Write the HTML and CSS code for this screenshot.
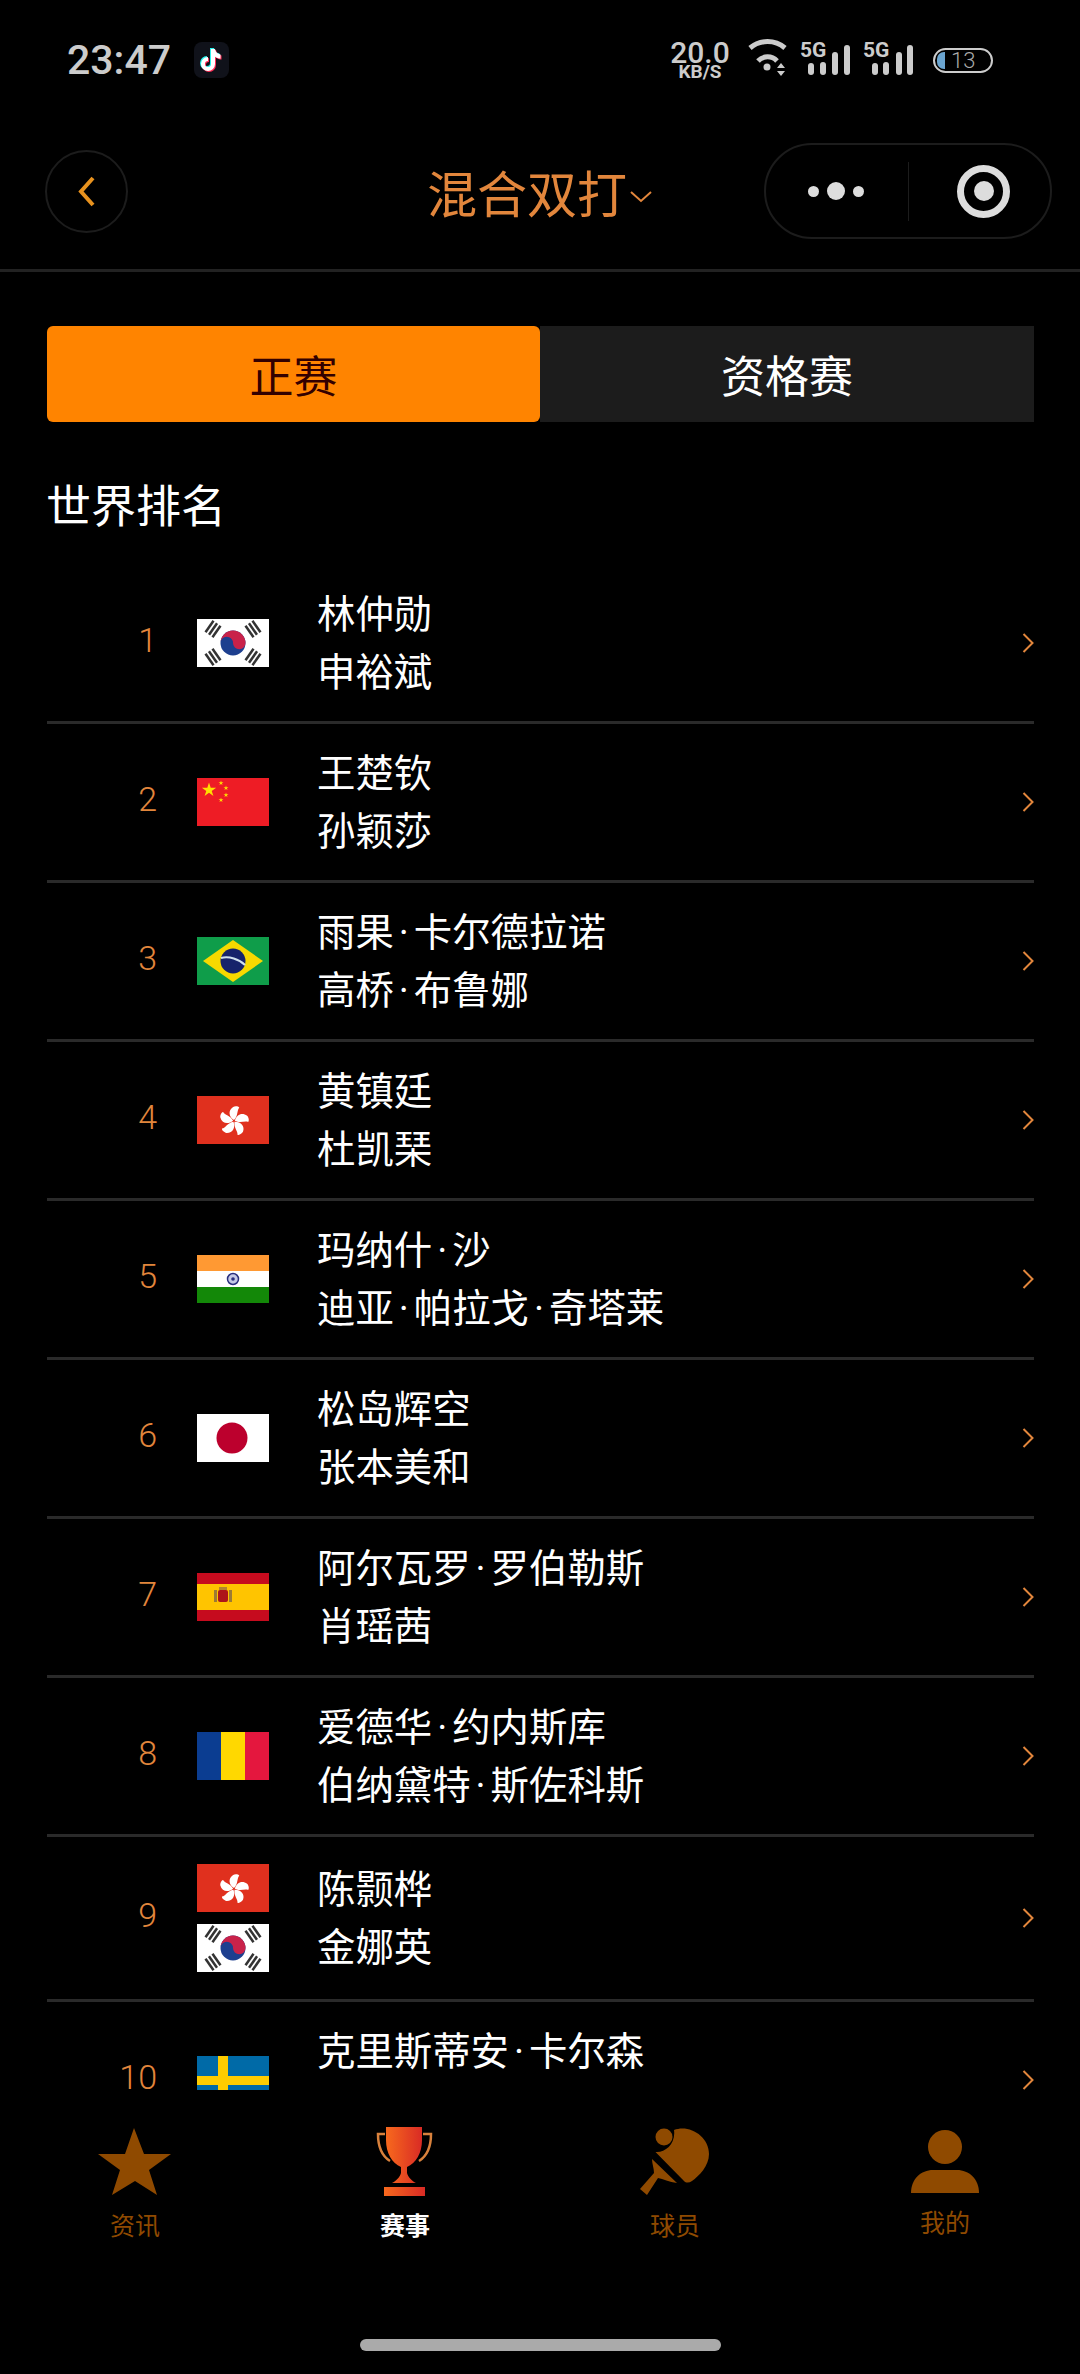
FILE: index.html
```html
<!DOCTYPE html>
<html lang="zh-CN">
<head>
  <meta charset="UTF-8">
  <title>混合双打</title>
  <link rel="stylesheet" href="styles.css">
</head>
<body>

<svg class="defs" width="0" height="0" aria-hidden="true">
  <defs>
    <polygon id="star" points="0,-1 .225,-.309 .951,-.309 .363,.118 .588,.809 0,.382 -.588,.809 -.363,.118 -.951,-.309 -.225,-.309"/>
    <path id="petal" d="M0 -1C-6 -5 -7 -12 -1 -16C1 -17 5 -17 6 -15C3 -12 5 -6 0 -1Z" transform="scale(.88)"/>
    <symbol id="flag-kr" viewBox="0 0 72 48">
      <rect width="72" height="48" fill="#fff"/>
      <circle cx="36" cy="24" r="12.5" fill="#1d3f8f"/>
      <path d="M23.500 24A12.500 12.500 0 0 1 48.500 24A6.250 6.250 0 0 1 36 24A6.250 6.250 0 0 0 23.500 24Z" fill="#c9224a"/>
      <g fill="#333">
        <g transform="translate(16 10) rotate(-55)"><rect x="-7" y="-5.500" width="14" height="2.500"/><rect x="-7" y="-1.200" width="14" height="2.500"/><rect x="-7" y="3" width="14" height="2.500"/></g>
        <g transform="translate(56 10) rotate(55)"><rect x="-7" y="-5.500" width="14" height="2.500"/><rect x="-7" y="-1.200" width="14" height="2.500"/><rect x="-7" y="3" width="14" height="2.500"/></g>
        <g transform="translate(16 38) rotate(55)"><rect x="-7" y="-5.500" width="14" height="2.500"/><rect x="-7" y="-1.200" width="14" height="2.500"/><rect x="-7" y="3" width="14" height="2.500"/></g>
        <g transform="translate(56 38) rotate(-55)"><rect x="-7" y="-5.500" width="14" height="2.500"/><rect x="-7" y="-1.200" width="14" height="2.500"/><rect x="-7" y="3" width="14" height="2.500"/></g>
      </g>
    </symbol>
    <symbol id="flag-hk" viewBox="0 0 72 48">
      <rect width="72" height="48" fill="#e0301e"/>
      <g fill="#fff" transform="translate(37 25)">
        <use href="#petal"/>
        <use href="#petal" transform="rotate(72)"/>
        <use href="#petal" transform="rotate(144)"/>
        <use href="#petal" transform="rotate(216)"/>
        <use href="#petal" transform="rotate(288)"/>
      </g>
    </symbol>
  </defs>
</svg>

<div class="app">
  <div class="statusbar">
    <span class="clock">23:47</span>
    <svg class="tiktok" width="35" height="36" viewBox="0 0 35 36">
      <rect width="35" height="36" rx="8" fill="#10121a"/>
      <path d="M17 7h4c.5 3 2.5 5 5.5 5.5v4c-2 0-4-.7-5.5-1.8v7.3a7 7 0 1 1-7-7v4a3 3 0 1 0 3 3Z" fill="#25f4ee" transform="translate(-1 -1)"/>
      <path d="M17 7h4c.5 3 2.5 5 5.5 5.5v4c-2 0-4-.7-5.5-1.8v7.3a7 7 0 1 1-7-7v4a3 3 0 1 0 3 3Z" fill="#fe2c55" transform="translate(1 1)"/>
      <path d="M17 7h4c.5 3 2.5 5 5.5 5.5v4c-2 0-4-.7-5.5-1.8v7.3a7 7 0 1 1-7-7v4a3 3 0 1 0 3 3Z" fill="#fff"/>
    </svg>
    <div class="status-right">
      <div class="speed">
        <span class="speed-num">20.0</span>
        <span class="speed-unit">KB/S</span>
      </div>
      <svg class="wifi" width="39" height="40" viewBox="0 0 39 40">
        <g fill="none" stroke="#ccc" stroke-width="5">
          <path d="M2 10A27 27 0 0 1 37 10"/>
          <path d="M10 23A13 13 0 0 1 29 23"/>
        </g>
        <circle cx="19" cy="29" r="3.5" fill="#ccc"/>
        <path d="M33 25l4 5h-8ZM33 38l4-5h-8Z" fill="#ccc"/>
      </svg>
      <div class="signal">
        <span class="signal-text">5G</span>
        <svg width="50" height="36" viewBox="0 0 50 36">
          <rect x="8" y="21" width="6" height="12" rx="3"/>
          <rect x="20" y="20" width="6" height="13" rx="3"/>
          <rect x="32" y="10" width="6" height="23" rx="3"/>
          <rect x="44" y="3" width="6" height="30" rx="3"/>
        </svg>
      </div>
      <div class="signal">
        <span class="signal-text">5G</span>
        <svg width="50" height="36" viewBox="0 0 50 36">
          <rect x="9" y="21" width="6" height="12" rx="3"/>
          <rect x="20" y="20" width="6" height="13" rx="3"/>
          <rect x="33" y="10" width="6" height="23" rx="3"/>
          <rect x="44" y="3" width="6" height="30" rx="3"/>
        </svg>
      </div>
      <div class="battery">
        <span class="battery-fill"></span>
        <span class="battery-num">13</span>
      </div>
    </div>
  </div>

  <div class="nav">
    <div class="back">
      <svg width="19" height="31" viewBox="0 0 19 31"><polyline points="16,2 4,15.5 16,29" fill="none" stroke="#e8921e" stroke-width="4"/></svg>
    </div>
    <div class="nav-title">
      <span>混合双打</span>
      <svg width="22" height="12" viewBox="0 0 22 12"><polyline points="1,1 11,10 21,1" fill="none" stroke="#e2863c" stroke-width="2"/></svg>
    </div>
    <div class="capsule">
      <div class="capsule-dots">
        <span class="dot"></span>
        <span class="dot dot-big"></span>
        <span class="dot"></span>
      </div>
      <span class="capsule-line"></span>
      <div class="capsule-target"><span></span></div>
    </div>
  </div>

  <div class="tabs">
    <div class="tab tab-active">正赛</div>
    <div class="tab">资格赛</div>
  </div>

  <h2 class="section-title">世界排名</h2>

  <div class="list">
    <div class="row">
      <span class="rank">1</span>
      <div class="flags"><svg class="flag" viewBox="0 0 72 48"><use href="#flag-kr"/></svg></div>
      <div class="names"><div>林仲勋</div><div>申裕斌</div></div>
      <svg class="arrow" viewBox="0 0 12 20"><polyline points="1.5,1 10.5,10 1.5,19"/></svg>
    </div>
    <div class="row">
      <span class="rank">2</span>
      <div class="flags">
        <svg class="flag" viewBox="0 0 72 48">
          <rect width="72" height="48" fill="#ee1c25"/>
          <g fill="#ffde00">
            <use href="#star" transform="translate(12 12) scale(7.5)"/>
            <use href="#star" transform="translate(24 5) scale(2.6)"/>
            <use href="#star" transform="translate(29 10) scale(2.6)"/>
            <use href="#star" transform="translate(29 17) scale(2.6)"/>
            <use href="#star" transform="translate(24 22) scale(2.6)"/>
          </g>
        </svg>
      </div>
      <div class="names"><div>王楚钦</div><div>孙颖莎</div></div>
      <svg class="arrow" viewBox="0 0 12 20"><polyline points="1.5,1 10.5,10 1.5,19"/></svg>
    </div>
    <div class="row">
      <span class="rank">3</span>
      <div class="flags">
        <svg class="flag" viewBox="0 0 72 48">
          <rect width="72" height="48" fill="#0f9d4a"/>
          <polygon points="6,24 36,3 66,24 36,45" fill="#f7d900"/>
          <circle cx="36" cy="24" r="12.5" fill="#16236b"/>
          <path d="M24 21C32 19 42 22 48 28" fill="none" stroke="#cfe0ee" stroke-width="2"/>
        </svg>
      </div>
      <div class="names"><div>雨果<span class="sep">·</span>卡尔德拉诺</div><div>高桥<span class="sep">·</span>布鲁娜</div></div>
      <svg class="arrow" viewBox="0 0 12 20"><polyline points="1.5,1 10.5,10 1.5,19"/></svg>
    </div>
    <div class="row">
      <span class="rank">4</span>
      <div class="flags"><svg class="flag" viewBox="0 0 72 48"><use href="#flag-hk"/></svg></div>
      <div class="names"><div>黄镇廷</div><div>杜凯琹</div></div>
      <svg class="arrow" viewBox="0 0 12 20"><polyline points="1.5,1 10.5,10 1.5,19"/></svg>
    </div>
    <div class="row">
      <span class="rank">5</span>
      <div class="flags">
        <svg class="flag" viewBox="0 0 72 48">
          <rect width="72" height="16" fill="#ff9933"/>
          <rect y="16" width="72" height="16" fill="#fff"/>
          <rect y="32" width="72" height="16" fill="#138808"/>
          <circle cx="36" cy="24" r="5.5" fill="#c5c9e6" stroke="#2a2f7e" stroke-width="1.5"/>
          <circle cx="36" cy="24" r="1.8" fill="#2a2f7e"/>
        </svg>
      </div>
      <div class="names"><div>玛纳什<span class="sep">·</span>沙</div><div>迪亚<span class="sep">·</span>帕拉戈<span class="sep">·</span>奇塔莱</div></div>
      <svg class="arrow" viewBox="0 0 12 20"><polyline points="1.5,1 10.5,10 1.5,19"/></svg>
    </div>
    <div class="row">
      <span class="rank">6</span>
      <div class="flags">
        <svg class="flag" viewBox="0 0 72 48">
          <rect width="72" height="48" fill="#fff"/>
          <circle cx="35" cy="24" r="15.5" fill="#bc002d"/>
        </svg>
      </div>
      <div class="names"><div>松岛辉空</div><div>张本美和</div></div>
      <svg class="arrow" viewBox="0 0 12 20"><polyline points="1.5,1 10.5,10 1.5,19"/></svg>
    </div>
    <div class="row">
      <span class="rank">7</span>
      <div class="flags">
        <svg class="flag" viewBox="0 0 72 48">
          <rect width="72" height="48" fill="#c60b1e"/>
          <rect y="11" width="72" height="26" fill="#ffc400"/>
          <rect x="21" y="17" width="10" height="12" rx="2" fill="#ad1519"/>
          <rect x="17" y="17" width="3" height="12" fill="#9c7a35"/>
          <rect x="32" y="17" width="3" height="12" fill="#9c7a35"/>
          <rect x="22" y="14" width="8" height="3" fill="#b3852e"/>
        </svg>
      </div>
      <div class="names"><div>阿尔瓦罗<span class="sep">·</span>罗伯勒斯</div><div>肖瑶茜</div></div>
      <svg class="arrow" viewBox="0 0 12 20"><polyline points="1.5,1 10.5,10 1.5,19"/></svg>
    </div>
    <div class="row">
      <span class="rank">8</span>
      <div class="flags">
        <svg class="flag" viewBox="0 0 72 48">
          <rect width="24" height="48" fill="#0b3d91"/>
          <rect x="24" width="24" height="48" fill="#ffd800"/>
          <rect x="48" width="24" height="48" fill="#e4173e"/>
        </svg>
      </div>
      <div class="names"><div>爱德华<span class="sep">·</span>约内斯库</div><div>伯纳黛特<span class="sep">·</span>斯佐科斯</div></div>
      <svg class="arrow" viewBox="0 0 12 20"><polyline points="1.5,1 10.5,10 1.5,19"/></svg>
    </div>
    <div class="row">
      <span class="rank">9</span>
      <div class="flags flags-double">
        <svg class="flag" viewBox="0 0 72 48"><use href="#flag-hk"/></svg>
        <svg class="flag" viewBox="0 0 72 48"><use href="#flag-kr"/></svg>
      </div>
      <div class="names"><div>陈颢桦</div><div>金娜英</div></div>
      <svg class="arrow" viewBox="0 0 12 20"><polyline points="1.5,1 10.5,10 1.5,19"/></svg>
    </div>
    <div class="row">
      <span class="rank">10</span>
      <div class="flags">
        <svg class="flag" viewBox="0 0 72 48">
          <rect width="72" height="48" fill="#006aa7"/>
          <rect x="21" width="10" height="48" fill="#fecc00"/>
          <rect y="20" width="72" height="9" fill="#fecc00"/>
        </svg>
      </div>
      <div class="names"><div>克里斯蒂安<span class="sep">·</span>卡尔森</div><div>克里斯蒂娜<span class="sep">·</span>卡尔伯格</div></div>
      <svg class="arrow" viewBox="0 0 12 20"><polyline points="1.5,1 10.5,10 1.5,19"/></svg>
    </div>
  </div>

  <div class="tabbar">
    <div class="bar-item">
      <svg class="bar-icon" width="74" height="71" viewBox="0 0 74 71"><polygon points="36,2 46,28 73,28 51,44 59,69 37,55 14,69 22,44 0,28 27,28" fill="#8f4a00"/></svg>
      <span class="bar-label">资讯</span>
    </div>
    <div class="bar-item">
      <svg class="bar-icon" width="58" height="71" viewBox="0 0 58 71">
        <defs>
          <linearGradient id="cup" x1="0" x2="1" y1="0" y2="0">
            <stop offset="0" stop-color="#f7691d"/>
            <stop offset="1" stop-color="#d92b25"/>
          </linearGradient>
        </defs>
        <path d="M10 1H46V14C46 27 40 37 31 41V47C32 51 36 55 40 57H16C20 55 24 51 25 47V41C16 37 10 27 10 14Z" fill="url(#cup)"/>
        <path d="M9 8H2C2 20 6 30 14 35M47 8H55C55 20 51 30 43 35" fill="none" stroke="#d8813c" stroke-width="2.5"/>
        <rect x="8" y="61" width="41" height="9" fill="url(#cup)"/>
      </svg>
      <span class="bar-label bar-label-active">赛事</span>
    </div>
    <div class="bar-item">
      <svg class="bar-icon" width="72" height="71" viewBox="0 0 72 71" fill="#8f4a00">
        <circle cx="25" cy="11" r="8.5"/>
        <path d="M35 4C50 -2 70 10 70 28C70 40 60 50 53 55C50 57 47 57 45 55L16.5 26C26 27 37 18 35 4Z"/>
        <path d="M13 33L38 57C30 56 24 53 19 52L8 69L1 63L15 47C15 42 13 38 13 33Z"/>
      </svg>
      <span class="bar-label">球员</span>
    </div>
    <div class="bar-item">
      <svg class="bar-icon bar-icon-me" width="68" height="65" viewBox="0 0 68 65" fill="#8f4a00">
        <circle cx="34" cy="18" r="17"/>
        <path d="M0 64C0 50 10 41 22 41H46C58 41 68 50 68 64Z"/>
      </svg>
      <span class="bar-label">我的</span>
    </div>
    <div class="home-bar"></div>
  </div>
</div>

</body>
</html>
```

FILE: styles.css
```css
* {
  box-sizing: border-box;
}
body {
  margin: 0;
  background: #000;
  font-family: "Noto Sans CJK SC", Roboto, sans-serif;
  color: #fff;
}
.defs {
  position: absolute;
}
.app {
  width: 1080px;
  height: 2374px;
  display: flex;
  flex-direction: column;
  overflow: hidden;
}

/* status bar */
.statusbar {
  height: 120px;
  display: flex;
  align-items: center;
  padding: 0 87px 0 67px;
  flex: none;
}
.clock {
  font-family: Roboto, sans-serif;
  font-size: 41px;
  font-weight: 500;
  color: #ccc;
}
.tiktok {
  margin-left: 23px;
}
.status-right {
  margin-left: auto;
  display: flex;
  align-items: center;
}
.speed {
  width: 58px;
  display: flex;
  flex-direction: column;
  align-items: center;
  font-family: Roboto, sans-serif;
  font-weight: 500;
  color: #ccc;
}
.speed-num {
  font-size: 30px;
  line-height: 22px;
}
.speed-unit {
  font-size: 19px;
  font-weight: 700;
  line-height: 15px;
}
.wifi {
  margin: 0 0 4px 19px;
}
.signal {
  position: relative;
  display: flex;
  margin-left: 13px;
  fill: #ccc;
}
.signal-text {
  position: absolute;
  left: 0;
  top: 0;
  font-family: Roboto, sans-serif;
  font-size: 21px;
  font-weight: 700;
  line-height: 16px;
  color: #ccc;
}
.battery {
  width: 60px;
  height: 25px;
  margin-left: 20px;
  border: 2px solid #ccc;
  border-radius: 13px;
  display: flex;
  align-items: center;
  padding-left: 2px;
}
.battery-fill {
  width: 8px;
  height: 17px;
  background: #6ba5d0;
  border-radius: 7px 0 0 7px;
}
.battery-num {
  margin-left: 6px;
  font-family: Roboto, sans-serif;
  font-size: 22px;
  font-weight: 300;
  line-height: 21px;
  color: #aaa;
}

/* title bar */
.nav {
  flex: none;
  height: 96px;
  margin: 23px 0 30px;
  padding: 0 28px 0 45px;
  display: flex;
  align-items: center;
}
.back {
  width: 83px;
  height: 83px;
  border: 2px solid #1c1c1c;
  border-radius: 50%;
  display: flex;
  align-items: center;
  justify-content: center;
}
.nav-title {
  margin-left: 299px;
  display: flex;
  align-items: center;
  font-size: 50px;
  line-height: 60px;
  color: #e2863c;
}
.nav-title svg {
  margin: 12px 0 0 3px;
}
.capsule {
  width: 288px;
  height: 96px;
  margin-left: auto;
  border: 2px solid #1c1c1c;
  border-radius: 48px;
  display: flex;
  align-items: center;
}
.capsule-dots {
  width: 140px;
  margin-right: 2px;
  display: flex;
  align-items: center;
  justify-content: center;
  gap: 8px;
}
.dot {
  width: 11px;
  height: 11px;
  border-radius: 50%;
  background: #ddd;
}
.dot-big {
  width: 18px;
  height: 18px;
}
.capsule-line {
  width: 1px;
  height: 59px;
  background: #1c1c1c;
}
.capsule-target {
  width: 53px;
  height: 53px;
  margin-left: 48px;
  border: 7px solid #ddd;
  border-radius: 50%;
  display: flex;
  align-items: center;
  justify-content: center;
}
.capsule-target span {
  width: 20px;
  height: 20px;
  border-radius: 50%;
  background: #ddd;
}

/* main / qualifying switch */
.tabs {
  flex: none;
  height: 153px;
  padding: 54px 46px 0 47px;
  border-top: 3px solid #222;
  display: flex;
}
.tab {
  flex: 0 0 494px;
  height: 96px;
  display: flex;
  align-items: center;
  justify-content: center;
  background: #1c1c1c;
  font-size: 44px;
  color: #fff;
}
.tab-active {
  flex-basis: 493px;
  background: #ff8400;
  border-radius: 6px;
  color: #300;
}
.section-title {
  flex: none;
  margin: 52px 0 31px 46px;
  font-size: 45px;
  font-weight: 400;
  line-height: 60px;
}

/* ranking list */
.list {
  flex: 1;
  min-height: 0;
  overflow: hidden;
  margin: 0 46px 0 47px;
}
.row {
  min-height: 159px;
  display: flex;
  align-items: center;
  border-bottom: 3px solid #2a2a2a;
}
.rank {
  width: 110px;
  margin-top: -6px;
  text-align: right;
  font-family: Roboto, sans-serif;
  font-size: 34px;
  font-weight: 300;
  color: #e2863c;
}
.flags {
  margin-left: 40px;
  display: flex;
  flex-direction: column;
  gap: 12px;
}
.flags-double {
  padding: 27px 0;
}
.flag {
  display: block;
  width: 72px;
  height: 48px;
}
.names {
  margin: -6px 0 0 48px;
  font-size: 38.4px;
  line-height: 58px;
}
.sep {
  margin: 0 5px;
  font-family: Roboto, sans-serif;
  line-height: 0;
}
.arrow {
  width: 12px;
  height: 20px;
  margin-left: auto;
  fill: none;
  stroke: #e2863c;
  stroke-width: 2;
}

/* bottom bar */
.tabbar {
  flex: none;
  height: 284px;
  padding-top: 36px;
  display: flex;
  flex-wrap: wrap;
  align-content: flex-start;
}
.bar-item {
  width: 270px;
  display: flex;
  flex-direction: column;
  align-items: center;
  gap: 12px;
}
.bar-icon-me {
  margin-top: 3px;
}
.bar-label {
  font-size: 25px;
  line-height: 30px;
  color: #8f4a00;
}
.bar-label-active {
  color: #fff;
  font-weight: 700;
}
.home-bar {
  width: 361px;
  height: 12px;
  margin: 100px auto 0;
  background: #aaa;
  border-radius: 6px;
}
```
